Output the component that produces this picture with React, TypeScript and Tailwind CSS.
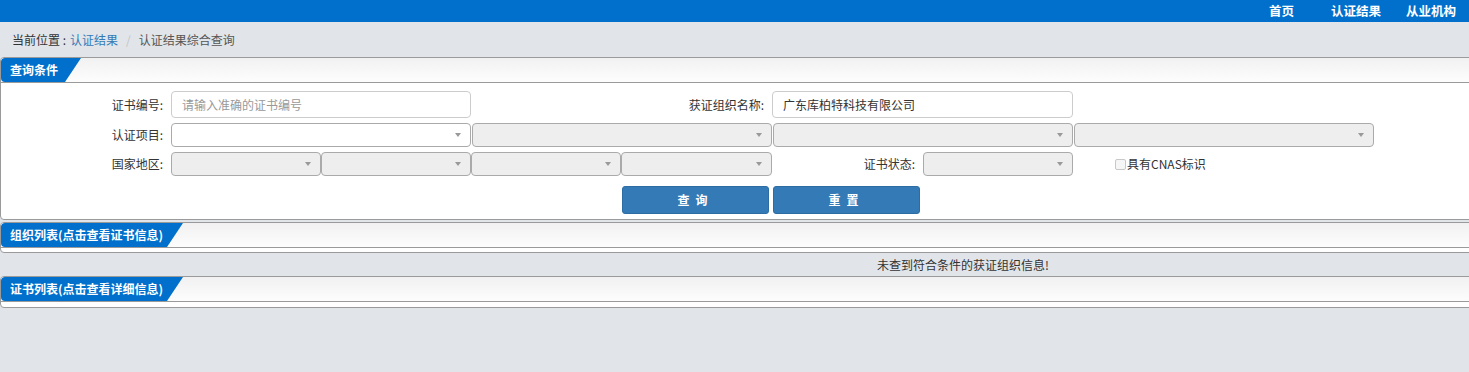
import React from "react";

const font = { fontFamily: '"Noto Sans CJK SC", "Noto Sans", sans-serif' };

function Tab({ title, width }: { title: string; width: string }) {
  return (
    <div
      className={`flex h-full items-center rounded-l-[4px] bg-[#0070cc] pl-[9px] text-[12px] font-bold text-white ${width} [clip-path:polygon(0_0,100%_0,calc(100%-16px)_100%,0_100%)]`}
    >
      {title}
    </div>
  );
}

function PanelHead({ title, width }: { title: string; width: string }) {
  return (
    <div className="h-[25px] border-b border-[#9a9a9a] bg-gradient-to-b from-[#f1f1f1] to-[#fdfdfd]">
      <Tab title={title} width={width} />
    </div>
  );
}

function Select({ w, disabled = true }: { w: string; disabled?: boolean }) {
  return (
    <div
      className={`relative h-[24px] ${w} shrink-0 rounded-[4px] border border-[#aaa] ${disabled ? "bg-[#eeeeee]" : "bg-white"}`}
    >
      <span className="absolute right-[9px] top-[9px] h-0 w-0 border-x-[3px] border-t-[4px] border-x-transparent border-t-[#999]" />
    </div>
  );
}

export default function App() {
  return (
    <div className="min-h-[372px] overflow-hidden bg-[#e1e5ea] text-[12px] text-[#333]" style={font}>
      <header className="flex h-[22px] items-center justify-end bg-[#0070cc] pr-[13px] text-[12.5px] font-bold text-white">
        <a href="#">首页</a>
        <a href="#" className="ml-[37px]">认证结果</a>
        <a href="#" className="ml-[25px]">从业机构</a>
      </header>

      <div className="flex h-[35px] items-center pl-[12px]">
        <span>当前位置 :</span>
        <a href="#" className="ml-[4px] text-[#337ab7]">认证结果</a>
        <span className="mx-[8px] text-[#c4c4c4]">/</span>
        <span className="text-[#555]">认证结果综合查询</span>
      </div>

      <section className="-mr-[4px] overflow-hidden rounded-[4px] border border-[#9a9a9a] bg-white">
        <PanelHead title="查询条件" width="w-[80px]" />
        <div className="flex flex-col pb-[5px] pt-[8px]">
          <div className="flex items-center">
            <label className="w-[162px] text-right">证书编号:</label>
            <input
              className="ml-[8px] h-[27px] w-[300px] rounded-[4px] border border-[#ccc] px-[10px] text-[12px] text-[#333] outline-none placeholder:text-[#999]"
              placeholder="请输入准确的证书编号"
            />
            <label className="w-[293px] text-right">获证组织名称:</label>
            <input
              className="ml-[8px] h-[27px] w-[301px] rounded-[4px] border border-[#ccc] px-[10px] text-[12px] text-[#333] outline-none"
              defaultValue="广东库柏特科技有限公司"
            />
          </div>

          <div className="mt-[5px] flex items-center">
            <label className="w-[162px] text-right">认证项目:</label>
            <div className="ml-[8px] flex gap-[1px]">
              <Select w="w-[300px]" disabled={false} />
              <Select w="w-[300px]" />
              <Select w="w-[300px]" />
              <Select w="w-[300px]" />
            </div>
          </div>

          <div className="mt-[5px] flex items-center">
            <label className="w-[162px] text-right">国家地区:</label>
            <div className="ml-[8px] flex">
              <Select w="w-[150px]" />
              <Select w="w-[150px]" />
              <Select w="w-[150px]" />
              <Select w="w-[151px]" />
            </div>
            <label className="w-[143px] text-right">证书状态:</label>
            <div className="ml-[8px]">
              <Select w="w-[150px]" />
            </div>
            <label className="ml-[42px] flex items-center">
              <span className="h-[11px] w-[11px] rounded-[2px] border border-[#c8c8c8] bg-[#f6f6f6]" />
              <span className="ml-[1px]">具有CNAS标识</span>
            </label>
          </div>

          <div className="mt-[10px] flex gap-[4px] pl-[621px]">
            <button className="h-[28px] w-[147px] rounded-[3px] border border-[#2e6da4] bg-[#337ab7] text-[12px] font-bold tracking-[0.5em] text-white">
              查询
            </button>
            <button className="h-[28px] w-[147px] rounded-[3px] border border-[#2e6da4] bg-[#337ab7] text-[12px] font-bold tracking-[0.5em] text-white">
              重置
            </button>
          </div>
        </div>
      </section>

      <section className="-mr-[4px] mt-[2px] overflow-hidden rounded-[4px] border border-[#9a9a9a] bg-white">
        <PanelHead title="组织列表(点击查看证书信息)" width="w-[182px]" />
        <div className="h-[4px]" />
      </section>

      <div className="flex h-[23px] items-center pl-[877px] text-[#333]">未查到符合条件的获证组织信息!</div>

      <section className="-mr-[4px] overflow-hidden rounded-[4px] border border-[#9a9a9a] bg-white">
        <PanelHead title="证书列表(点击查看详细信息)" width="w-[182px]" />
        <div className="h-[5px]" />
      </section>
    </div>
  );
}
